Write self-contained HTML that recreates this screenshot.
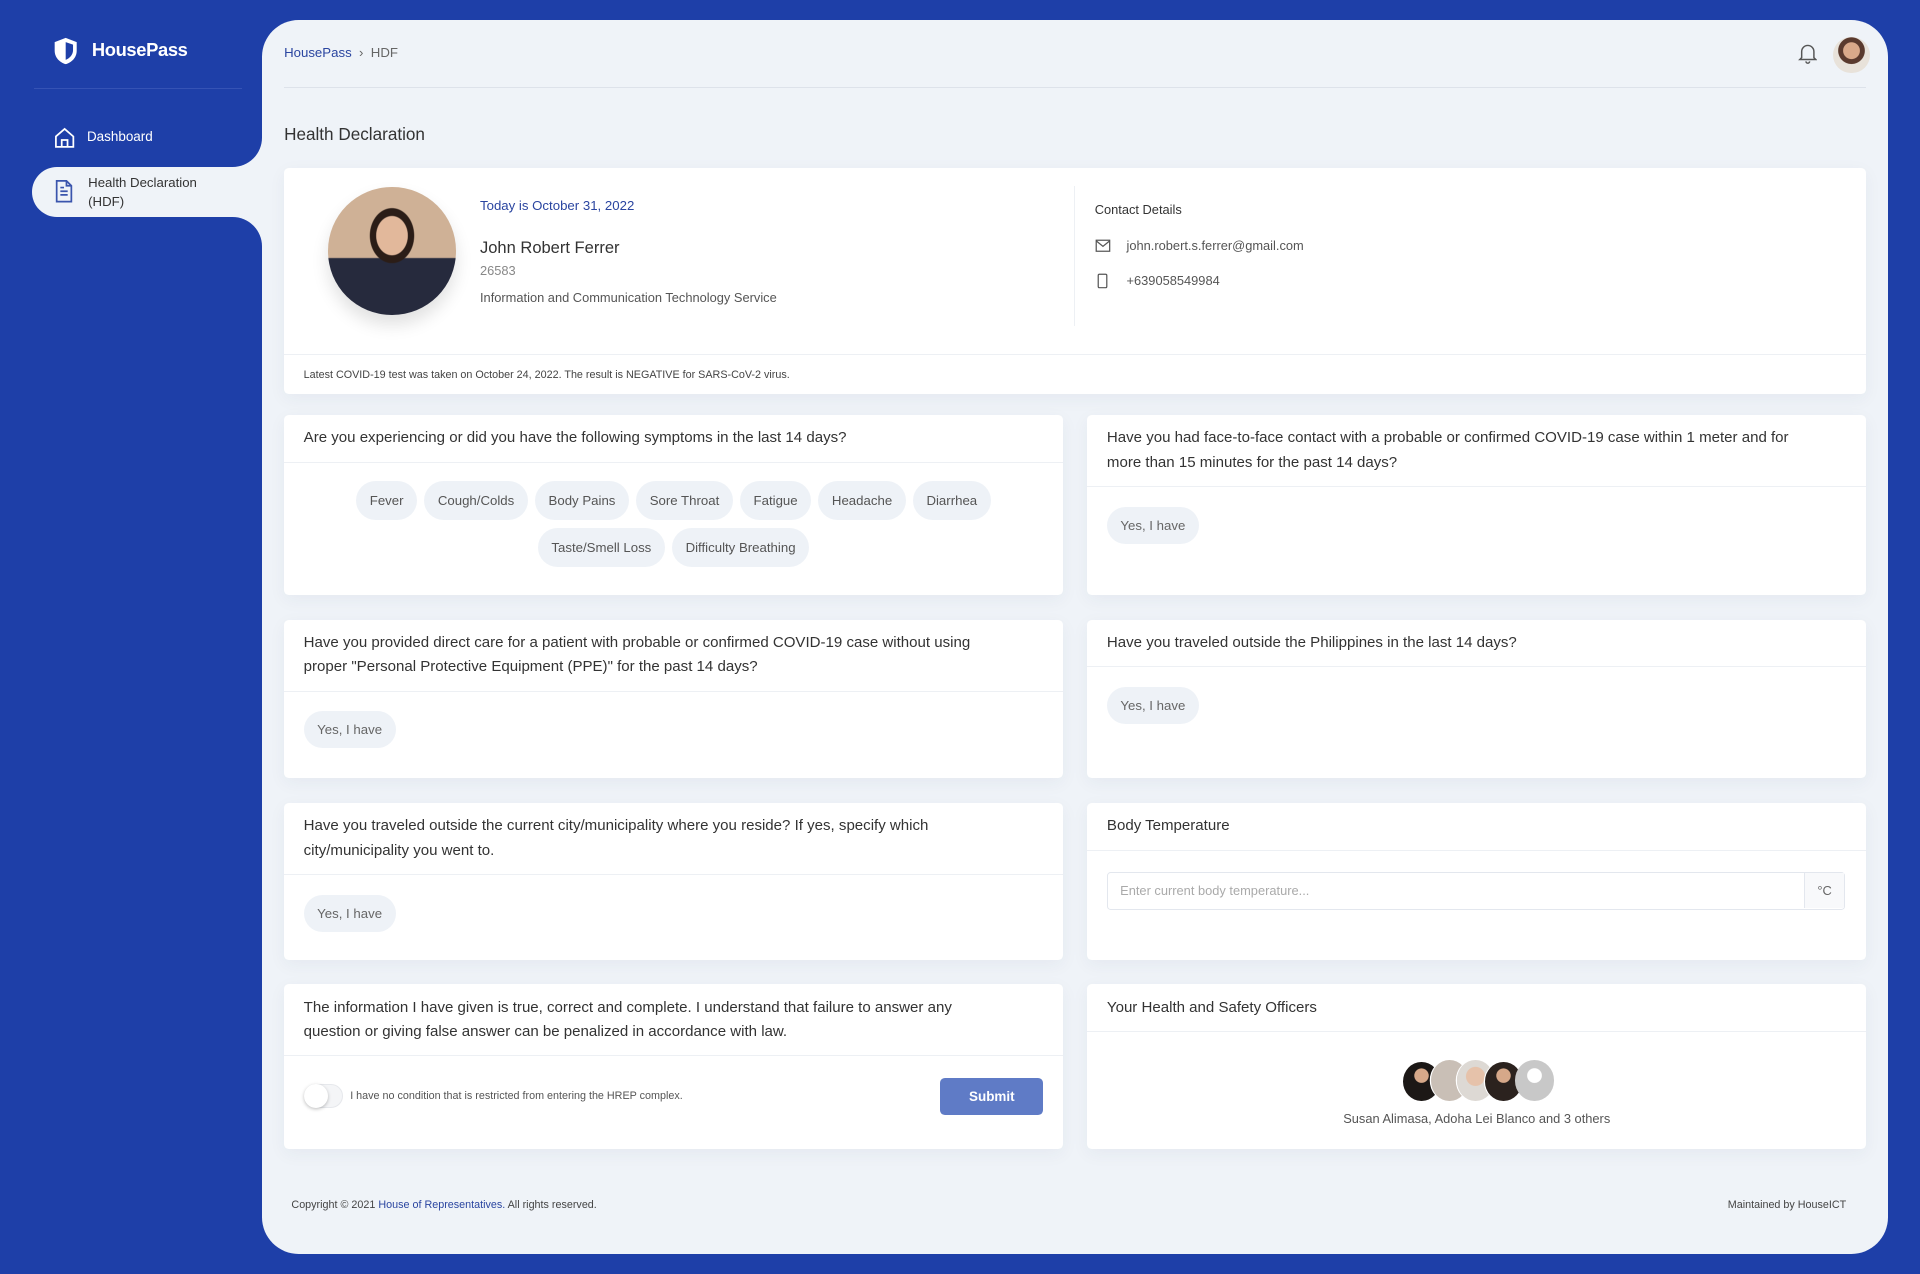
<!DOCTYPE html>
<html><head><meta charset="utf-8"><style>
*{box-sizing:border-box;margin:0;padding:0}
html,body{width:1920px;height:1274px;overflow:hidden;background:#1e3fa8}
#r{zoom:1.22449;position:relative;width:1568px;height:1040px;font-family:"Liberation Sans",sans-serif;color:#333}
.a{position:absolute}
.main{left:214px;top:16px;width:1328px;height:1008px;background:#eff3f8;border-radius:30px}
.card{background:#fff;border-radius:4px;box-shadow:0 4px 14px rgba(30,50,90,.05)}
.q{font-size:12.3px;color:#333;line-height:20px;padding:9px 16px;white-space:nowrap}
.hr{border-top:1px solid #edf0f4}
.chip{display:inline-block;background:#eef2f7;color:#555;font-size:10.8px;border-radius:18px;padding:10px 11px;margin:0 3px 6px}
.yes{position:absolute;background:#eef2f7;color:#666;font-size:10.8px;border-radius:18px;padding:9px 11px}
</style></head><body><div id="r">
<svg class="a" style="left:42px;top:29px" width="24" height="24" viewBox="0 0 24 24"><path d="M12 1.5L3 5v7c0 5.5 4 9.5 9 11 5-1.5 9-5.5 9-11V5z" fill="#fff"/><path d="M12 5v14.5c3.5-1.5 6-4.5 6-8V7z" fill="#1e3fa8"/></svg>
<div class="a" style="left:75px;top:32px;color:#fff;font-size:15px;font-weight:bold;letter-spacing:-.3px">HousePass</div>
<div class="a" style="left:28px;top:72px;width:170px;border-top:1px solid #3553b5"></div>
<svg class="a" style="left:43px;top:103px" width="19" height="19" viewBox="0 0 20 20" fill="none" stroke="#fff" stroke-width="1.5"><path d="M2.5 9L10 2.5 17.5 9V18h-15z"/><path d="M7.5 18v-6h5v6"/></svg>
<div class="a" style="left:71px;top:105px;color:#fff;font-size:11px">Dashboard</div>
<div class="a" style="left:26px;top:136px;width:200px;height:41px;background:#eff3f8;border-radius:21px 0 0 21px"></div>
<div class="a" style="left:184px;top:106px;width:30px;height:30px;background:#eff3f8"></div>
<div class="a" style="left:164px;top:86px;width:50px;height:50px;background:#1e3fa8;border-radius:0 0 24px 0"></div>
<div class="a" style="left:184px;top:177px;width:30px;height:30px;background:#eff3f8"></div>
<div class="a" style="left:164px;top:177px;width:50px;height:50px;background:#1e3fa8;border-radius:0 24px 0 0"></div>
<div class="a main"></div>
<svg class="a" style="left:43px;top:146px" width="18" height="20" viewBox="0 0 18 20" fill="none" stroke="#3a55ad" stroke-width="1.4"><path d="M3 1.5h8l4 4V18.5H3z"/><path d="M11 1.5v4h4M6 10h6M6 13h6M6 7h3"/></svg>
<div class="a" style="left:72px;top:141px;color:#333;font-size:10.8px;line-height:16px">Health Declaration<br>(HDF)</div>
<div class="a" style="left:232px;top:37px;font-size:10.8px;color:#2a45a0">HousePass <span style="color:#666">&nbsp;›&nbsp; HDF</span></div>
<div class="a" style="left:232px;top:71px;width:1292px;border-top:1px solid #dde2ea"></div>
<svg class="a" style="left:1468px;top:35px" width="16" height="17" viewBox="0 0 16 17" fill="none" stroke="#555" stroke-width="1.2"><path d="M3 12V7a5 5 0 0110 0v5l1.5 1.5h-13z"/><path d="M6.5 15a1.5 1.5 0 003 0"/></svg>
<div class="a" style="left:1497px;top:30px;width:30px;height:30px;border-radius:50%;background:radial-gradient(circle at 50% 38%,#d9a98a 0 28%,#5a3a2e 30% 45%,#e8e2da 47%)"></div>
<div class="a" style="left:232px;top:101px;font-size:14px;color:#333">Health Declaration</div>
<div class="a card" style="left:232px;top:137px;width:1292px;height:185px">
 <div class="a" style="left:36px;top:16px;width:104px;height:104px;border-radius:50%;background:radial-gradient(ellipse at 50% 38%,#e2b89b 0 17%,#2b1d17 18% 24%,transparent 25%),linear-gradient(180deg,#cfb196 0 55%,#262a3d 56%);box-shadow:0 8px 14px rgba(0,0,0,.12)"></div>
 <div class="a" style="left:160px;top:25px;font-size:10.8px;color:#2a45a0">Today is October 31, 2022</div>
 <div class="a" style="left:160px;top:57px;font-size:13.5px;color:#333">John Robert Ferrer</div>
 <div class="a" style="left:160px;top:78px;font-size:10.5px;color:#888">26583</div>
 <div class="a" style="left:160px;top:100px;font-size:10.5px;color:#555">Information and Communication Technology Service</div>
 <div class="a" style="left:645px;top:15px;height:114px;border-left:1px solid #edf0f4"></div>
 <div class="a" style="left:662px;top:28px;font-size:10.5px;color:#333">Contact Details</div>
 <svg class="a" style="left:662px;top:58px" width="13" height="11" viewBox="0 0 13 11" fill="none" stroke="#555" stroke-width="1"><rect x="1" y="1" width="11" height="9"/><path d="M1 1.5l5.5 4.5 5.5-4.5"/></svg>
 <div class="a" style="left:688px;top:57px;font-size:10.5px;color:#555">john.robert.s.ferrer@gmail.com</div>
 <svg class="a" style="left:664px;top:86px" width="9" height="13" viewBox="0 0 9 13" fill="none" stroke="#555" stroke-width="1"><rect x="1" y="1" width="7" height="11" rx="1"/></svg>
 <div class="a" style="left:688px;top:86px;font-size:10.5px;color:#555">+639058549984</div>
 <div class="a hr" style="left:0;top:152px;width:100%"></div>
 <div class="a" style="left:16px;top:164px;font-size:8.8px;color:#444">Latest COVID-19 test was taken on October 24, 2022. The result is NEGATIVE for SARS-CoV-2 virus.</div>
</div>
<div class="a card" style="left:232px;top:339px;width:636px;height:147px">
 <div class="q">Are you experiencing or did you have the following symptoms in the last 14 days?</div>
 <div class="hr"></div>
 <div style="text-align:center;padding:15px 40px 0">
 <span class="chip">Fever</span><span class="chip">Cough/Colds</span><span class="chip">Body Pains</span><span class="chip">Sore Throat</span><span class="chip">Fatigue</span><span class="chip">Headache</span><span class="chip">Diarrhea</span><br><span class="chip">Taste/Smell Loss</span><span class="chip">Difficulty Breathing</span></div>
</div>
<div class="a card" style="left:888px;top:339px;width:636px;height:147px">
 <div class="q">Have you had face-to-face contact with a probable or confirmed COVID-19 case within 1 meter and for<br>more than 15 minutes for the past 14 days?</div>
 <div class="hr"></div>
 <div class="yes" style="left:16px;top:75px">Yes, I have</div>
</div>
<div class="a card" style="left:232px;top:506px;width:636px;height:129px">
 <div class="q">Have you provided direct care for a patient with probable or confirmed COVID-19 case without using<br>proper "Personal Protective Equipment (PPE)" for the past 14 days?</div>
 <div class="hr"></div>
 <div class="yes" style="left:16px;top:75px">Yes, I have</div>
</div>
<div class="a card" style="left:888px;top:506px;width:636px;height:129px">
 <div class="q">Have you traveled outside the Philippines in the last 14 days?</div>
 <div class="hr"></div>
 <div class="yes" style="left:16px;top:55px">Yes, I have</div>
</div>
<div class="a card" style="left:232px;top:656px;width:636px;height:128px">
 <div class="q">Have you traveled outside the current city/municipality where you reside? If yes, specify which<br>city/municipality you went to.</div>
 <div class="hr"></div>
 <div class="yes" style="left:16px;top:75px">Yes, I have</div>
</div>
<div class="a card" style="left:888px;top:656px;width:636px;height:128px">
 <div class="q">Body Temperature</div>
 <div class="hr"></div>
 <div class="a" style="left:16px;top:56px;width:603px;height:31px;border:1px solid #e3e7ee;border-radius:3px">
  <div class="a" style="left:10px;top:8px;font-size:10.5px;color:#aaa">Enter current body temperature...</div>
  <div class="a" style="right:0;top:0;width:33px;height:29px;border-left:1px solid #e3e7ee;background:#f8f9fb;font-size:10.5px;color:#666;text-align:center;line-height:29px">°C</div>
 </div>
</div>
<div class="a card" style="left:232px;top:804px;width:636px;height:134px">
 <div class="q">The information I have given is true, correct and complete. I understand that failure to answer any<br>question or giving false answer can be penalized in accordance with law.</div>
 <div class="hr"></div>
 <div class="a" style="left:16px;top:81px;width:32px;height:20px;border-radius:10px;background:#f4f5f7;border:1px solid #e6e8ec"></div>
 <div class="a" style="left:16px;top:81px;width:20px;height:20px;border-radius:50%;background:#fff;box-shadow:0 1px 3px rgba(0,0,0,.25)"></div>
 <div class="a" style="left:54px;top:86px;font-size:8.8px;color:#555">I have no condition that is restricted from entering the HREP complex.</div>
 <div class="a" style="left:536px;top:76px;width:84px;height:31px;background:#5f7bc6;border-radius:4px;color:#fff;font-size:11px;font-weight:bold;text-align:center;line-height:31px">Submit</div>
</div>
<div class="a card" style="left:888px;top:804px;width:636px;height:134px">
 <div class="q">Your Health and Safety Officers</div>
 <div class="hr"></div>
 <div class="a" style="left:258px;top:63px;width:30px;height:32px;border-radius:50%;background:radial-gradient(circle at 50% 35%,#d6a889 0 22%,#1c1816 24%)"></div>
 <div class="a" style="left:281px;top:62px;width:30px;height:33px;border-radius:50%;background:#c9bfb6;box-shadow:-1px 0 0 #fff"></div>
 <div class="a" style="left:302px;top:62px;width:30px;height:33px;border-radius:50%;background:radial-gradient(circle at 50% 40%,#e6c2aa 0 30%,#ddd9d4 32%);box-shadow:-1px 0 0 #fff"></div>
 <div class="a" style="left:325px;top:63px;width:30px;height:32px;border-radius:50%;background:radial-gradient(circle at 50% 35%,#d6a889 0 22%,#2b221e 24%);box-shadow:-1px 0 0 #fff"></div>
 <div class="a" style="left:349px;top:62px;width:32px;height:33px;border-radius:50%;background:radial-gradient(circle at 50% 38%,#fff 0 22%,#c8c8c8 24%)"></div>
 <div class="a" style="left:0;top:103px;width:100%;text-align:center;font-size:10.5px;color:#555">Susan Alimasa, Adoha Lei Blanco and 3 others</div>
</div>
<div class="a" style="left:238px;top:979px;font-size:8.8px;color:#444">Copyright © 2021 <span style="color:#2a45a0">House of Representatives.</span> All rights reserved.</div>
<div class="a" style="left:1411px;top:979px;font-size:8.8px;color:#444">Maintained by HouseICT</div>
</div></body></html>
